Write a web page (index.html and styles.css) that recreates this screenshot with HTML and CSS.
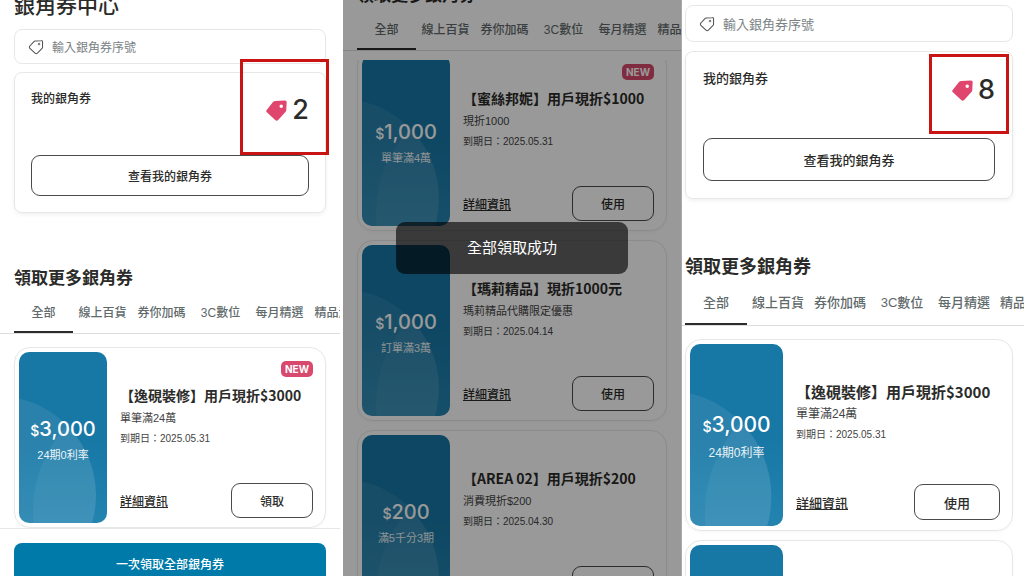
FILE: index.html
```html
<!DOCTYPE html>
<html lang="zh-Hant">
<head>
  <meta charset="UTF-8">
  <title>銀角券中心</title>
  <meta name="viewport" content="width=device-width, initial-scale=1.0">
  <link rel="stylesheet" href="styles.css">
</head>
<body>
  <!-- shared shapes -->
  <svg class="defs" aria-hidden="true">
    <symbol id="tag-line" viewBox="0 0 24 24">
      <path d="M11.2 3.1 20 2.4a1.6 1.6 0 0 1 1.8 1.7v8.3a2.4 2.4 0 0 1-.7 1.7l-7 7.2a2.6 2.6 0 0 1-3.6 0L2.8 13.9a2.4 2.4 0 0 1 0-3.4L8.2 4.6a4.8 4.8 0 0 1 3-1.5Z" fill="none" stroke="currentColor" stroke-width="1.6" stroke-linejoin="round"/>
      <circle cx="16.6" cy="7.6" r="1.2" fill="none" stroke="currentColor" stroke-width="1.4"/>
    </symbol>
    <symbol id="tag-fill" viewBox="0 0 24 24">
      <path fill-rule="evenodd" d="M10.6 1.1 21.4.6A2 2 0 0 1 23.6 2.8l-.4 8.4a3.6 3.6 0 0 1-1 2.4l-8.3 9.2a2.4 2.4 0 0 1-3.4 0L1 14.1a2.2 2.2 0 0 1 0-3.1l7-8.7a3.6 3.6 0 0 1 2.6-1.2ZM17.4 5a2 2 0 1 0 0 4 2 2 0 0 0 0-4Z" fill="currentColor"/>
    </symbol>
    <clipPath id="bubble-clip"><circle cx="-23" cy="144" r="100"/></clipPath>
    <symbol id="bubbles" viewBox="0 0 88 172" preserveAspectRatio="none">
      <circle cx="-23" cy="144" r="100" fill="#fff" fill-opacity=".08"/>
      <circle cx="141" cy="160" r="127" fill="#fff" fill-opacity=".05" clip-path="url(#bubble-clip)"/>
    </symbol>
  </svg>

  <main class="screens">
    <section class="panel">
      <div class="scroll">
        <h1>銀角券中心</h1>
        <label class="search">
          <svg class="search-icon"><use href="#tag-line"/></svg>
          <input type="text" placeholder="輸入銀角券序號" aria-label="輸入銀角券序號">
        </label>
        <div class="summary">
          <div class="summary-head">
            <span class="summary-label">我的銀角券</span>
            <span class="count"><svg><use href="#tag-fill"/></svg>2</span>
          </div>
          <button class="btn btn-wide">查看我的銀角券</button>
          <div class="mark"></div>
        </div>
        <h2>領取更多銀角券</h2>
        <nav class="tabs">
          <a href="#" class="active">全部</a>
          <a href="#">線上百貨</a>
          <a href="#">券你加碼</a>
          <a href="#">3C數位</a>
          <a href="#">每月精選</a>
          <a href="#">精品溫選</a>
        </nav>
        <div class="coupons">
          <article class="coupon">
            <div class="coupon-value">
              <svg class="bubbles"><use href="#bubbles"/></svg>
              <p class="amount"><small>$</small>3,000</p>
              <p class="term">24期0利率</p>
            </div>
            <div class="coupon-body">
              <span class="badge">NEW</span>
              <h3>【逸硯裝修】用戶現折$3000</h3>
              <p class="desc">單筆滿24萬</p>
              <p class="date">到期日：2025.05.31</p>
              <div class="actions">
                <a href="#">詳細資訊</a>
                <button class="btn">領取</button>
              </div>
            </div>
          </article>
        </div>
      </div>
      <footer class="claim-bar">
        <button class="claim-all">一次領取全部銀角券</button>
      </footer>
    </section>

    <section class="panel panel-list">
      <div class="list-head">
        <h2>領取更多銀角券</h2>
        <nav class="tabs">
          <a href="#" class="active">全部</a>
          <a href="#">線上百貨</a>
          <a href="#">券你加碼</a>
          <a href="#">3C數位</a>
          <a href="#">每月精選</a>
          <a href="#">精品溫選</a>
        </nav>
      </div>
      <div class="scroll">
        <div class="coupons">
          <article class="coupon">
            <div class="coupon-value">
              <svg class="bubbles"><use href="#bubbles"/></svg>
              <p class="amount"><small>$</small>1,000</p>
              <p class="term">單筆滿4萬</p>
            </div>
            <div class="coupon-body">
              <span class="badge">NEW</span>
              <h3>【蜜絲邦妮】用戶現折$1000</h3>
              <p class="desc">現折1000</p>
              <p class="date">到期日：2025.05.31</p>
              <div class="actions">
                <a href="#">詳細資訊</a>
                <button class="btn">使用</button>
              </div>
            </div>
          </article>
          <article class="coupon">
            <div class="coupon-value">
              <svg class="bubbles"><use href="#bubbles"/></svg>
              <p class="amount"><small>$</small>1,000</p>
              <p class="term">訂單滿3萬</p>
            </div>
            <div class="coupon-body">
              <h3>【瑪莉精品】現折1000元</h3>
              <p class="desc">瑪莉精品代購限定優惠</p>
              <p class="date">到期日：2025.04.14</p>
              <div class="actions">
                <a href="#">詳細資訊</a>
                <button class="btn">使用</button>
              </div>
            </div>
          </article>
          <article class="coupon">
            <div class="coupon-value">
              <svg class="bubbles"><use href="#bubbles"/></svg>
              <p class="amount"><small>$</small>200</p>
              <p class="term">滿5千分3期</p>
            </div>
            <div class="coupon-body">
              <h3>【AREA 02】用戶現折$200</h3>
              <p class="desc">消費現折$200</p>
              <p class="date">到期日：2025.04.30</p>
              <div class="actions">
                <a href="#">詳細資訊</a>
                <button class="btn">使用</button>
              </div>
            </div>
          </article>
        </div>
      </div>
      <div class="overlay">
        <div class="toast" role="status">全部領取成功</div>
      </div>
    </section>

    <section class="panel panel-large">
      <div class="scroll">
        <label class="search">
          <svg class="search-icon"><use href="#tag-line"/></svg>
          <input type="text" placeholder="輸入銀角券序號" aria-label="輸入銀角券序號">
        </label>
        <div class="summary">
          <div class="summary-head">
            <span class="summary-label">我的銀角券</span>
            <span class="count"><svg><use href="#tag-fill"/></svg>8</span>
          </div>
          <button class="btn btn-wide">查看我的銀角券</button>
          <div class="mark"></div>
        </div>
        <h2>領取更多銀角券</h2>
        <nav class="tabs">
          <a href="#" class="active">全部</a>
          <a href="#">線上百貨</a>
          <a href="#">券你加碼</a>
          <a href="#">3C數位</a>
          <a href="#">每月精選</a>
          <a href="#">精品溫選</a>
        </nav>
        <div class="coupons">
          <article class="coupon">
            <div class="coupon-value">
              <svg class="bubbles"><use href="#bubbles"/></svg>
              <p class="amount"><small>$</small>3,000</p>
              <p class="term">24期0利率</p>
            </div>
            <div class="coupon-body">
              <h3>【逸硯裝修】用戶現折$3000</h3>
              <p class="desc">單筆滿24萬</p>
              <p class="date">到期日：2025.05.31</p>
              <div class="actions">
                <a href="#">詳細資訊</a>
                <button class="btn">使用</button>
              </div>
            </div>
          </article>
          <article class="coupon">
            <div class="coupon-value"></div>
            <div class="coupon-body"></div>
          </article>
        </div>
      </div>
    </section>
  </main>
</body>
</html>
```

FILE: styles.css
```css
:root {
  --ink: #2b2b29;
  --muted: #5f6a6b;
  --line: #e6e8e8;
  --blue: #1777a5;
  --pink: #e0456d;
}

* {
  box-sizing: border-box;
}

body {
  margin: 0;
  font-family: "Liberation Sans", "Noto Sans CJK TC", sans-serif;
  color: var(--ink);
  background: #fff;
}

h1, h2, h3, p {
  margin: 0;
  font-weight: 500;
}

h1, h2, h3 {
  font-family: "Noto Sans CJK TC", sans-serif;
}

h2, h3 {
  font-weight: 700;
}

a {
  color: inherit;
}

button, input {
  font-family: "Noto Sans CJK TC", sans-serif;
  color: inherit;
}

.defs {
  position: absolute;
  width: 0;
  height: 0;
}

.screens {
  display: grid;
  grid-template-columns: 343fr 338fr 343fr;
  height: 100vh;
  overflow: hidden;
}

/* Sizes shared by everything inside one phone screen */
.panel {
  --text: 12px;
  --title: 14px;
  --desc: 11px;
  --date: 10px;
  --heading: 17px;
  --amount: 20px;
  --tab: 59px;
  --tab-height: 44px;
  --card-height: 181px;
  --value-width: 88px;
  --btn-width: 82px;
  --btn-height: 35px;
  --side: 14px;
  position: relative;
  display: flex;
  flex-direction: column;
  min-width: 0;
  height: 100vh;
  overflow: hidden;
  padding-right: 3px;
}

.panel-list {
  padding-right: 0;
  background: #fff;
}

.panel-large {
  --text: 13px;
  --title: 15px;
  --desc: 12px;
  --heading: 18px;
  --amount: 21px;
  --tab: 62px;
  --tab-height: 48px;
  --card-height: 192px;
  --value-width: 93px;
  --btn-width: 86px;
  --btn-height: 36px;
  --side: 3px;
  padding-right: 0;
  border-left: 1px solid #aaa;
}

.scroll {
  flex: 1;
  min-height: 0;
  overflow: hidden;
}

h1 {
  height: 29px;
  padding-left: var(--side);
  font-size: 21px;
  line-height: 8px;
}

h2 {
  padding-left: var(--side);
  font-size: var(--heading);
  line-height: 26px;
}

.search {
  display: flex;
  align-items: center;
  gap: 8px;
  height: 35px;
  margin: 0 var(--side) 8px;
  padding: 0 13px;
  border: 1px solid var(--line);
  border-radius: 8px;
}

.search-icon {
  width: 16px;
  height: 16px;
  flex: none;
  color: #555;
}

.search input {
  flex: 1;
  min-width: 0;
  padding: 0;
  border: none;
  outline: none;
  background: transparent;
  font-size: var(--text);
}

.search input::placeholder {
  color: #7a8284;
  opacity: 1;
}

.summary {
  position: relative;
  height: 141px;
  margin: 0 var(--side) 51px;
  padding: 16px;
  border: 1px solid var(--line);
  border-radius: 8px;
  box-shadow: 0 2px 4px rgba(0, 0, 0, 0.06);
}

.summary-head {
  display: flex;
  justify-content: space-between;
  align-items: flex-start;
  height: 66px;
}

.summary-label {
  font-family: "Noto Sans CJK TC", sans-serif;
  font-size: var(--text);
  font-weight: 500;
  line-height: 18px;
}

.count {
  display: flex;
  align-items: center;
  gap: 5px;
  font-family: Inter, sans-serif;
  font-size: 27px;
  font-weight: 500;
  line-height: 42px;
}

.count svg {
  width: 21px;
  height: 21px;
  color: var(--pink);
}

.btn {
  width: var(--btn-width);
  height: var(--btn-height);
  padding: 0;
  border: 1px solid #4a4a4a;
  border-radius: 9px;
  background: transparent;
  font-size: var(--text);
  font-weight: 500;
  cursor: pointer;
}

.btn-wide {
  width: 100%;
  height: 41px;
}

/* Red frame around the coupon count */
.mark {
  position: absolute;
  top: -14px;
  right: -4px;
  width: 89px;
  height: 96px;
  border: 3px solid #c91414;
}

.tabs {
  display: flex;
  height: var(--tab-height);
  padding-left: var(--side);
  border-bottom: 1px solid #dcdfdf;
  overflow: hidden;
}

.tabs a {
  flex: none;
  width: var(--tab);
  border-bottom: 2px solid transparent;
  color: var(--muted);
  font-size: var(--text);
  font-weight: 500;
  line-height: 46px;
  text-align: center;
  text-decoration: none;
  white-space: nowrap;
}

.tabs a.active {
  border-bottom-color: var(--ink);
}

.coupons {
  display: flex;
  flex-direction: column;
  gap: 9px;
  padding: 13px var(--side) 0;
}

.coupon {
  display: flex;
  flex: none;
  height: var(--card-height);
  padding: 4px 12px 4px 4px;
  border: 1px solid var(--line);
  border-radius: 16px;
  box-shadow: 0 1px 3px rgba(0, 0, 0, 0.04);
}

.coupon-value {
  position: relative;
  flex: none;
  width: var(--value-width);
  padding-top: 63px;
  border-radius: 10px;
  overflow: hidden;
  background: linear-gradient(var(--blue) 50%, #2484b0);
  color: #fff;
  text-align: center;
}

.bubbles {
  position: absolute;
  inset: 0;
  width: 100%;
  height: 100%;
}

.amount {
  position: relative;
  font-family: Inter, sans-serif;
  font-size: var(--amount);
  line-height: 28px;
}

.amount small {
  font-size: 14px;
}

.term {
  position: relative;
  font-size: var(--desc);
  font-weight: 400;
  line-height: 20px;
  opacity: 0.9;
}

.coupon-body {
  position: relative;
  display: flex;
  flex: 1;
  flex-direction: column;
  min-width: 0;
  padding: 32px 0 5px 13px;
}

.badge {
  position: absolute;
  top: 9px;
  right: 0;
  width: 32px;
  border-radius: 5px;
  background: #d8496d;
  color: #fff;
  font-family: Inter, sans-serif;
  font-size: 10px;
  font-weight: 700;
  line-height: 16px;
  text-align: center;
}

.coupon h3 {
  font-size: var(--title);
  line-height: 23px;
  white-space: nowrap;
}

.desc {
  font-size: var(--desc);
  font-weight: 400;
  line-height: 22px;
  color: #444;
}

.date {
  font-size: var(--date);
  font-weight: 400;
  line-height: 19px;
  color: #444;
}

.actions {
  display: flex;
  justify-content: space-between;
  align-items: center;
  margin-top: auto;
  font-size: var(--text);
}

.actions a {
  font-family: "Noto Sans CJK TC", sans-serif;
  font-weight: 500;
}

.claim-bar {
  flex: none;
  height: 48px;
  padding: 14px 14px 0;
  border-top: 1px solid var(--line);
  overflow: hidden;
}

.claim-all {
  width: 100%;
  height: 41px;
  padding: 0;
  border: none;
  border-radius: 8px;
  background: #007aa8;
  color: #fff;
  font-size: 12px;
  font-weight: 500;
  cursor: pointer;
}

/* Scrolled list with the toast on top */
.list-head {
  flex: none;
  padding-bottom: 9px;
}

.list-head h2 {
  margin-top: -19px;
}

.panel-list .coupons {
  margin-top: -23px;
}

.overlay {
  position: absolute;
  inset: 0;
  background: rgba(0, 0, 0, 0.4);
}

.toast {
  position: absolute;
  top: 222px;
  left: 53px;
  right: 53px;
  border-radius: 9px;
  background: rgba(0, 0, 0, 0.62);
  color: #fff;
  font-size: 15px;
  line-height: 52px;
  text-align: center;
}

/* Third screen is shown slightly bigger */
.panel-large .search {
  height: 37px;
  margin-top: 5px;
  margin-right: 11px;
  margin-bottom: 9px;
}

.panel-large .summary {
  height: 148px;
  margin-right: 11px;
  margin-bottom: 53px;
  padding: 17px;
}

.panel-large .summary-head {
  height: 69px;
}

.panel-large .btn-wide {
  height: 43px;
}

.panel-large .mark {
  top: 2px;
  right: 3px;
  width: 80px;
  height: 80px;
}

.panel-large .tabs a {
  line-height: 49px;
}

.panel-large .coupons {
  padding-right: 11px;
}

.panel-large .coupon-value {
  padding-top: 67px;
}

.panel-large .term {
  line-height: 24px;
}

.panel-large .coupon-body {
  padding-top: 36px;
  padding-bottom: 6px;
}
```
